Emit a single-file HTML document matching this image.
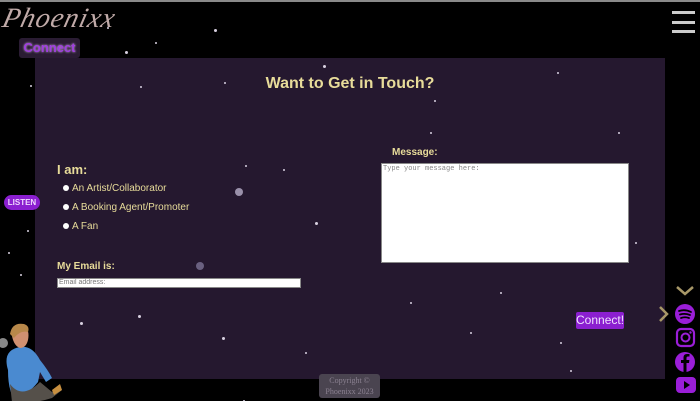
<!DOCTYPE html>
<html><head><meta charset="utf-8"><style>
*{margin:0;padding:0;box-sizing:border-box}
html,body{width:700px;height:401px;overflow:hidden;background:#000;font-family:"Liberation Sans",sans-serif}
body{position:relative;border-top:2px solid #8a8a8a}
.s{position:absolute;border-radius:50%;background:#d8d0e0}
#panel{position:absolute;left:35px;top:56px;width:630px;height:321px;background:#25182f}
.logo{position:absolute;left:3px;top:1px;font-family:"Liberation Serif",serif;font-style:italic;font-size:28px;color:#c0aaa8;letter-spacing:1px;transform:skewX(-14deg)}
.cbtn{position:absolute;left:19px;top:36px;width:61px;height:20px;background:#2a1c33;border-radius:3px;color:#a03ee0;font-weight:bold;font-size:13px;text-align:center;line-height:20px;text-shadow:0 0 2px #d8b8e8}
h1{position:absolute;left:0;width:630px;top:17px;text-align:center;font-size:16px;font-weight:bold;color:#e8dc9a}
.listen{position:absolute;left:4px;top:193px;width:36px;height:15px;background:#8b1fd0;border-radius:8px;color:#f0d8ff;font-size:8px;font-weight:bold;text-align:center;line-height:15px}
.opt{position:absolute;left:28px;font-size:10px;color:#e8dc9a}
.opt:before{content:"";display:inline-block;width:6px;height:6px;border-radius:50%;background:#fff;margin-right:3px;vertical-align:0}
</style></head><body>
<div id="panel">
<h1>Want to Get in Touch?</h1>
<div style="position:absolute;left:22px;top:104px;font-size:13px;font-weight:bold;color:#e8dc9a">I am:</div>
<div class="opt" style="top:125px">An Artist/Collaborator</div>
<div class="opt" style="top:144px">A Booking Agent/Promoter</div>
<div class="opt" style="top:163px">A Fan</div>
<div style="position:absolute;left:22px;top:203px;font-size:10px;font-weight:bold;color:#e8dc9a">My Email is:</div>
<div style="position:absolute;left:22px;top:220px;width:244px;height:10px;background:#fff;border:1px solid #888;font-size:7px;color:#777;line-height:8px;padding-left:1px">Email address:</div>
<div style="position:absolute;left:357px;top:89px;font-size:10px;font-weight:bold;color:#e8dc9a">Message:</div>
<div style="position:absolute;left:346px;top:105px;width:248px;height:100px;background:#fff;border:1px solid #888;font-family:'Liberation Mono',monospace;font-size:7px;color:#888;padding:1px">Type your message here:</div>
<div style="position:absolute;left:541px;top:254px;width:48px;height:17px;background:#8b1fd0;border-radius:2px;color:#f0e0ff;font-size:12px;text-align:center;line-height:17px">Connect!</div>
<div class="s" style="left:200px;top:130px;width:8px;height:8px;background:#9a90aa"></div>
<div class="s" style="left:161px;top:204px;width:8px;height:8px;background:#6a6080"></div>
</div>
<div class="logo">Phoenixx</div>
<div class="cbtn">Connect</div>
<div class="listen">LISTEN</div>
<div style="position:absolute;left:672px;top:9px;width:23px;height:3px;background:#ccc"></div>
<div style="position:absolute;left:672px;top:19px;width:23px;height:3px;background:#ccc"></div>
<div style="position:absolute;left:672px;top:28px;width:23px;height:3px;background:#ccc"></div>
<svg style="position:absolute;left:675px;top:282px" width="20" height="12"><path d="M2 3 L10 10 L18 3" stroke="#a89868" stroke-width="2.5" fill="none"/></svg>
<svg style="position:absolute;left:657px;top:303px" width="12" height="18"><path d="M3 2 L10 9 L3 16" stroke="#a89868" stroke-width="2.5" fill="none"/></svg>
<svg style="position:absolute;left:675px;top:302px" width="22" height="99">
<circle cx="10" cy="10" r="10" fill="#9a1ed8"/>
<path d="M4 7 Q10 5 16 8 M5 10.5 Q10 9 15 11 M6 14 Q10 12.5 14 14" stroke="#000" stroke-width="1.8" fill="none" stroke-linecap="round"/>
<rect x="2" y="25" width="17" height="17" rx="4" fill="none" stroke="#9a1ed8" stroke-width="2.2"/>
<circle cx="10.5" cy="33.5" r="4" fill="none" stroke="#9a1ed8" stroke-width="2"/>
<circle cx="15.5" cy="28.5" r="1.2" fill="#9a1ed8"/>
<circle cx="10" cy="58" r="10" fill="#9a1ed8"/>
<path d="M11.5 68 V59 H14 L14.4 56 H11.5 V54 Q11.5 52.5 13 52.5 H14.5 V50 H12 Q8.5 50 8.5 53.5 V56 H6 V59 H8.5 V68 Z" fill="#000"/>
<rect x="1" y="73" width="20" height="16" rx="4" fill="#9a1ed8"/>
<path d="M9 77 L15 81 L9 85 Z" fill="#000"/>
</svg>
<div style="position:absolute;left:319px;top:372px;width:61px;height:24px;background:#4a4450;border-radius:3px;color:#8a8090;font-family:'Liberation Serif',serif;font-size:8px;text-align:center;line-height:11px;padding-top:1px">Copyright ©<br>Phoenixx 2023</div>
<svg style="position:absolute;left:0;top:318px" width="62" height="83">
<path d="M8 50 Q2 30 20 27 Q32 25 40 40 Q48 50 52 58 L46 62 L40 52 L38 62 Q28 75 14 78 Q8 70 8 50Z" fill="#4a8ad0"/>
<path d="M10 64 Q22 80 40 62 L52 72 L58 66 L62 70 L52 78 Q30 85 12 82Z" fill="#55504a"/>
<path d="M52 70 L60 64 L62 70 L54 75Z" fill="#c89040"/>
<path d="M12 16 Q14 4 24 6 Q30 10 28 20 Q26 28 20 28 Q14 26 12 16Z" fill="#d09070"/>
<path d="M10 14 Q12 2 24 4 Q30 6 28 12 Q20 10 14 18Z" fill="#b8884a"/>
<circle cx="3" cy="23" r="5" fill="#888"/>
</svg>
<div class="s" style="left:214px;top:27px;width:3px;height:3px"></div>
<div class="s" style="left:155px;top:40px;width:2px;height:2px"></div>
<div class="s" style="left:125px;top:49px;width:3px;height:3px"></div>
<div class="s" style="left:107px;top:25px;width:2px;height:2px"></div>
<div class="s" style="left:140px;top:84px;width:2px;height:2px"></div>
<div class="s" style="left:224px;top:80px;width:2px;height:2px"></div>
<div class="s" style="left:323px;top:63px;width:3px;height:3px"></div>
<div class="s" style="left:245px;top:163px;width:2px;height:2px"></div>
<div class="s" style="left:283px;top:167px;width:2px;height:2px"></div>
<div class="s" style="left:315px;top:220px;width:3px;height:3px"></div>
<div class="s" style="left:434px;top:98px;width:2px;height:2px"></div>
<div class="s" style="left:618px;top:130px;width:2px;height:2px"></div>
<div class="s" style="left:557px;top:70px;width:2px;height:2px"></div>
<div class="s" style="left:635px;top:240px;width:2px;height:2px"></div>
<div class="s" style="left:470px;top:330px;width:2px;height:2px"></div>
<div class="s" style="left:560px;top:340px;width:2px;height:2px"></div>
<div class="s" style="left:80px;top:320px;width:3px;height:3px"></div>
<div class="s" style="left:138px;top:313px;width:3px;height:3px"></div>
<div class="s" style="left:222px;top:335px;width:3px;height:3px"></div>
<div class="s" style="left:305px;top:350px;width:2px;height:2px"></div>
<div class="s" style="left:27px;top:228px;width:2px;height:2px"></div>
<div class="s" style="left:8px;top:250px;width:2px;height:2px"></div>
<div class="s" style="left:20px;top:272px;width:2px;height:2px"></div>
<div class="s" style="left:30px;top:83px;width:2px;height:2px"></div>
<div class="s" style="left:243px;top:398px;width:2px;height:2px"></div>
<div class="s" style="left:570px;top:368px;width:2px;height:2px"></div>
<div class="s" style="left:430px;top:130px;width:2px;height:2px"></div>
<div class="s" style="left:500px;top:290px;width:2px;height:2px"></div>
<div class="s" style="left:410px;top:300px;width:2px;height:2px"></div>
</body></html>
